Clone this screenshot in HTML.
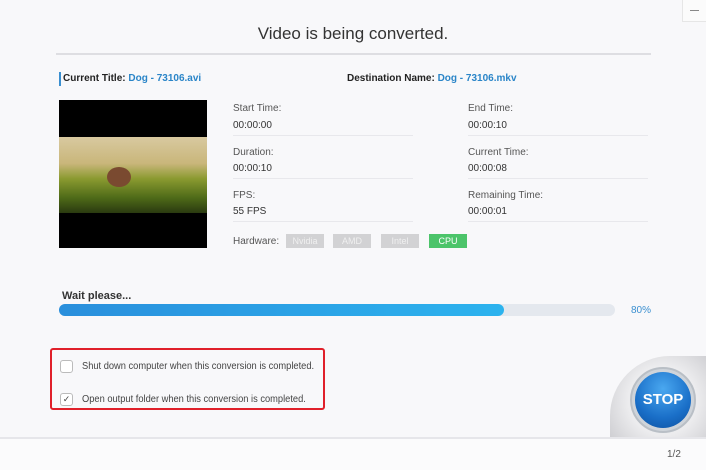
<!DOCTYPE html>
<html><head><style>
*{margin:0;padding:0;box-sizing:border-box}
html,body{overflow:hidden}
body{width:706px;height:470px;background:#f8f8fa;font-family:"Liberation Sans",sans-serif;position:relative;color:#333}
.a{position:absolute;white-space:nowrap}
.lbl{font-size:10px;color:#555}
.val{font-size:10px;color:#333}
.ln{position:absolute;height:1px;background:#e8e8ec}
.chip{position:absolute;top:234px;height:14px;width:38px;background:#d2d2d4;color:#f0f0f0;font-size:9px;text-align:center;line-height:14px}
.cb{position:absolute;left:60px;width:13px;height:13px;border:1px solid #bbb;border-radius:3px;background:#fff}
.ct{transform:scaleX(0.93);transform-origin:0 0}
</style></head><body>
<div class="a" style="right:0;top:0;width:24px;height:22px;border-left:1px solid #e6e6e6;border-bottom:1px solid #e6e6e6;background:#fbfbfb"><div style="position:absolute;left:7px;top:10px;width:9px;height:1px;background:#888"></div></div>
<div class="a" style="left:0;width:706px;top:24px;text-align:center;font-size:17px;color:#333">Video is being converted.</div>
<div class="ln" style="left:56px;top:53px;width:595px;height:2px;background:#dedee2"></div>
<div class="a" style="left:59px;top:72px;width:2px;height:14px;background:#3a8fd0"></div>
<div class="a" style="left:63px;top:73px;font-size:10px;font-weight:bold;color:#222">Current Title: <span style="color:#2a85c8">Dog - 73106.avi</span></div>
<div class="a" style="left:347px;top:73px;font-size:10px;font-weight:bold;color:#222">Destination Name: <span style="color:#2a85c8">Dog - 73106.mkv</span></div>
<div class="a" style="left:59px;top:100px;width:148px;height:148px;background:#000"><div style="position:absolute;top:37px;left:0;width:148px;height:76px;background:linear-gradient(180deg,#d8c9a0 0%,#c9b67a 35%,#8a9a30 55%,#4e6a18 80%,#2a3a10 100%)"><div style="position:absolute;left:48px;top:30px;width:24px;height:20px;border-radius:50%;background:#7a4a30"></div></div></div>
<div class="a lbl" style="left:233px;top:103px">Start Time:</div><div class="a val" style="left:233px;top:120px">00:00:00</div>
<div class="ln" style="left:233px;top:135px;width:180px"></div>
<div class="a lbl" style="left:468px;top:103px">End Time:</div><div class="a val" style="left:468px;top:120px">00:00:10</div>
<div class="ln" style="left:468px;top:135px;width:180px"></div>
<div class="a lbl" style="left:233px;top:147px">Duration:</div><div class="a val" style="left:233px;top:163px">00:00:10</div>
<div class="ln" style="left:233px;top:178px;width:180px"></div>
<div class="a lbl" style="left:468px;top:147px">Current Time:</div><div class="a val" style="left:468px;top:163px">00:00:08</div>
<div class="ln" style="left:468px;top:178px;width:180px"></div>
<div class="a lbl" style="left:233px;top:190px">FPS:</div><div class="a val" style="left:233px;top:206px">55 FPS</div>
<div class="ln" style="left:233px;top:221px;width:180px"></div>
<div class="a lbl" style="left:468px;top:190px">Remaining Time:</div><div class="a val" style="left:468px;top:206px">00:00:01</div>
<div class="ln" style="left:468px;top:221px;width:180px"></div>
<div class="a lbl" style="left:233px;top:236px">Hardware:</div>
<div class="chip" style="left:286px">Nvidia</div><div class="chip" style="left:333px">AMD</div><div class="chip" style="left:381px">Intel</div><div class="chip" style="left:429px;background:#4cc46a;color:#fff">CPU</div>
<div class="a" style="left:62px;top:290px;font-size:11px;font-weight:bold;color:#333">Wait please...</div>
<div class="a" style="left:59px;top:304px;width:556px;height:12px;border-radius:6px;background:#e4e8ee"></div>
<div class="a" style="left:59px;top:304px;width:445px;height:12px;border-radius:6px;background:linear-gradient(90deg,#2a8fdc,#2cb3ee)"></div>
<div class="a" style="left:631px;top:305px;font-size:10px;color:#3a8fd0">80%</div>
<div class="a" style="left:50px;top:348px;width:275px;height:62px;border:2px solid #e0202a;border-radius:3px"></div>
<div class="cb" style="top:360px"></div>
<div class="a ct" style="left:82px;top:361px;font-size:10px;color:#444">Shut down computer when this conversion is completed.</div>
<div class="cb" style="top:393px;font-size:9px;line-height:11px;text-align:center;color:#444">✓</div>
<div class="a ct" style="left:82px;top:394px;font-size:10px;color:#444">Open output folder when this conversion is completed.</div>
<div class="a" style="left:600px;top:350px;width:106px;height:87px;overflow:hidden">
  <div style="position:absolute;left:10px;top:6px;width:96px;height:81px;border-radius:60px 0 0 0;background:radial-gradient(circle at 55% 55%,#ececee 50%,#cacace 100%)"></div>
  <div style="position:absolute;left:30px;top:17px;width:66px;height:66px;border-radius:50%;background:#cfd4da;border:2px solid #b9bfc6"></div>
  <div style="position:absolute;left:35px;top:22px;width:56px;height:56px;border-radius:50%;background:radial-gradient(circle at 50% 30%,#4aa8f0,#1a6fc8 60%,#0c4f9e);text-align:center;line-height:56px;color:#fff;font-weight:bold;font-size:15px">STOP</div>
</div>
<div class="a" style="left:0;top:437px;width:706px;height:33px;background:#fbfbfc;border-top:2px solid #e6e6ea"></div>
<div class="a" style="left:667px;top:449px;font-size:10px;color:#555">1/2</div>
</body></html>
